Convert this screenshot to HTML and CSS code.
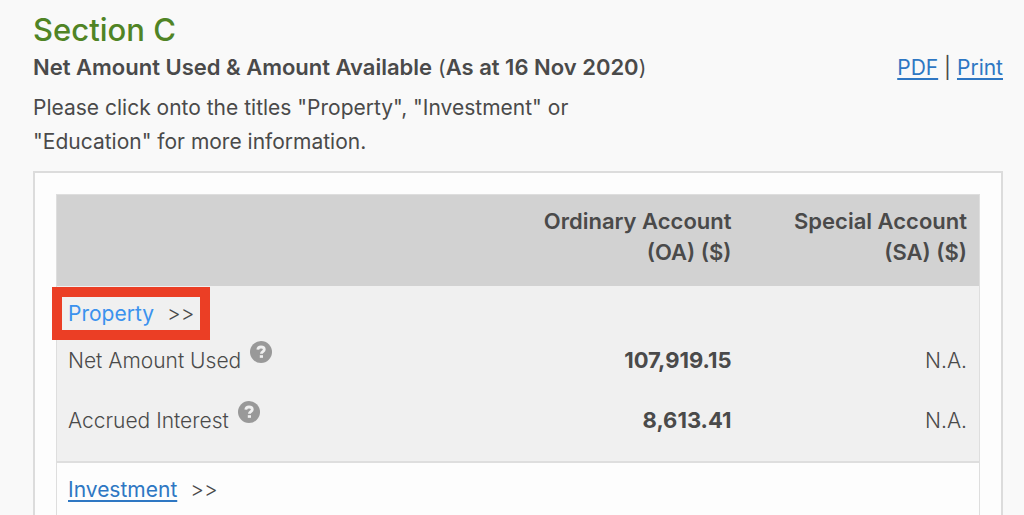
FILE: index.html
```html
<!DOCTYPE html>
<html lang="en">
<head>
    <meta charset="UTF-8">
    <meta name="viewport" content="width=device-width, initial-scale=1.0">
    <title>Section C</title>
    <link rel="stylesheet" href="styles.css">
</head>
<body>
    <div class="section">
        <h1>Section C</h1>
        <div class="subhead">
            <p class="asat"><b>Net Amount Used &amp; Amount Available</b> (<strong>As at 16 Nov 2020</strong>)</p>
            <p class="tools"><a href="#">PDF</a> | <a href="#">Print</a></p>
        </div>
        <p class="intro">Please click onto the titles "Property", "Investment" or "Education" for more information.</p>

        <div class="panel">
            <table class="accounts">
                <thead>
                    <tr>
                        <td></td>
                        <th scope="col">Ordinary Account<br>(OA) ($)</th>
                        <th scope="col">Special Account<br>(SA) ($)</th>
                    </tr>
                </thead>
                <tbody class="shaded">
                    <tr class="title">
                        <td colspan="3"><span class="marked"><a href="#" class="active">Property</a><span class="arrows">&gt;&gt;</span></span></td>
                    </tr>
                    <tr>
                        <td>Net Amount Used
                            <button type="button" class="help" aria-label="Help">
                                <svg viewBox="0 0 22 22" width="22" height="22">
                                    <circle cx="11" cy="11" r="11" fill="#999"/>
                                    <path d="M7.8 8.6C8 6.7 9.3 6 11 6c2 0 3.3 1 3.3 2.6 0 2-2.9 2.2-2.9 4.2" fill="none" stroke="#f0f0f0" stroke-width="2.8"/>
                                    <rect x="9.8" y="14.2" width="3.2" height="2.6" fill="#f0f0f0"/>
                                </svg>
                            </button>
                        </td>
                        <td class="num"><b>107,919.15</b></td>
                        <td class="num">N.A.</td>
                    </tr>
                    <tr class="last">
                        <td>Accrued Interest
                            <button type="button" class="help" aria-label="Help">
                                <svg viewBox="0 0 22 22" width="22" height="22">
                                    <circle cx="11" cy="11" r="11" fill="#999"/>
                                    <path d="M7.8 8.6C8 6.7 9.3 6 11 6c2 0 3.3 1 3.3 2.6 0 2-2.9 2.2-2.9 4.2" fill="none" stroke="#f0f0f0" stroke-width="2.8"/>
                                    <rect x="9.8" y="14.2" width="3.2" height="2.6" fill="#f0f0f0"/>
                                </svg>
                            </button>
                        </td>
                        <td class="num"><b>8,613.41</b></td>
                        <td class="num">N.A.</td>
                    </tr>
                </tbody>
                <tbody>
                    <tr class="title">
                        <td colspan="3"><a href="#">Investment</a><span class="arrows">&gt;&gt;</span></td>
                    </tr>
                </tbody>
            </table>
        </div>
    </div>
</body>
</html>
```
FILE: styles.css
```css
*{
    box-sizing: border-box;
    margin: 0;
    padding: 0;
}

body{
    height: 100vh;
    overflow: hidden;
    background: #f9f9f9;
    color: #4a4a4a;
    font-family: Inter, "Liberation Sans", sans-serif;
    font-size: 21px;
    line-height: 31px;
}

b, strong, th{
    font-size: 22px;
    font-weight: 600;
}

a{
    color: #2e77c3;
    text-underline-offset: 3px;
}

.section{
    padding: 7px 21px 0 33px;
}

h1{
    color: #508425;
    font-size: 31px;
    font-weight: 500;
    line-height: 45px;
}

.subhead{
    display: flex;
    justify-content: space-between;
}

.intro{
    max-width: 600px;
    margin: 8px 0 12px;
    line-height: 34px;
}

.panel{
    background: #fdfdfd;
    border: 2px solid #dcdcdc;
    border-bottom: 0;
    padding: 21px;
}

.accounts{
    width: 100%;
    border-collapse: collapse;
    border: 1px solid #dedede;
    font-weight: 300;
}

.accounts td,
.accounts th{
    height: 60px;
    padding: 0 12px 0 11px;
}

.accounts thead{
    background: #d2d2d2;
}

.accounts thead th{
    width: 236px;
    height: 91px;
    padding: 11px 12px 18px;
    text-align: right;
}

.shaded{
    background: #f0f0f0;
    border-bottom: 2px solid #dedede;
}

.accounts .title td{
    height: 54px;
    font-weight: 400;
}

.shaded .title + tr td{
    height: 40px;
}

.accounts .last td{
    height: 82px;
}

.accounts .num{
    text-align: right;
}

.num b{
    font-weight: 700;
}

.arrows{
    margin-left: 13px;
    font-weight: 300;
}

.active{
    color: #3b92ee;
    text-decoration: none;
}

/* red frame round the open title */
.marked{
    position: relative;
}

.marked::after{
    content: "";
    position: absolute;
    inset: -14px -16px;
    border: 10px solid #eb3e25;
    pointer-events: none;
}

.help{
    border: 0;
    background: none;
    width: 22px;
    height: 22px;
    margin: -6px 0 0 3px;
    vertical-align: 5px;
    cursor: pointer;
}

.help svg{
    display: block;
}
```
